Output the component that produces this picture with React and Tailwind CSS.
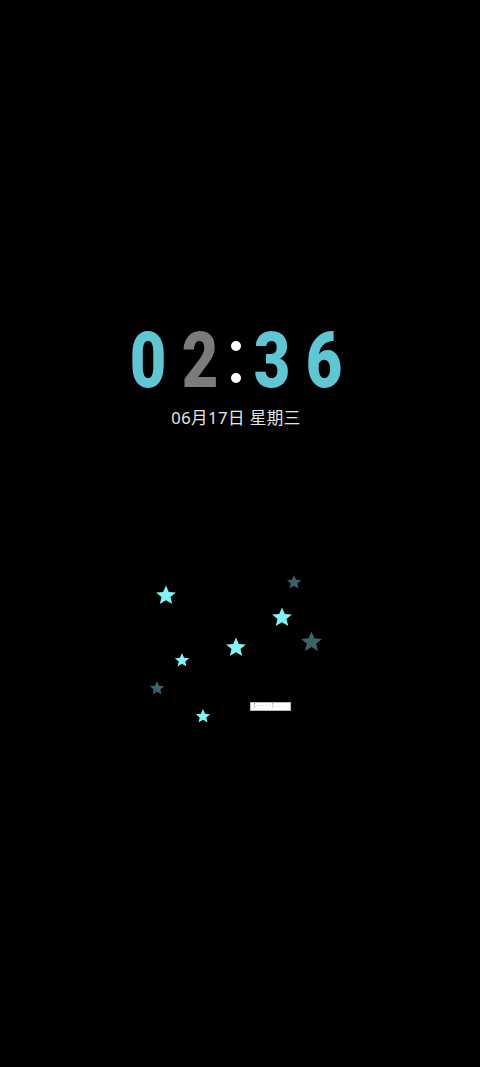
const STARS = [
  { x: 166, y: 595, s: 22, dim: false },
  { x: 294, y: 582, s: 16, dim: true },
  { x: 282, y: 617, s: 22, dim: false },
  { x: 311, y: 641, s: 23, dim: true },
  { x: 236, y: 647, s: 22, dim: false },
  { x: 182, y: 660, s: 16, dim: false },
  { x: 157, y: 688, s: 16, dim: true },
  { x: 203, y: 716, s: 16, dim: false },
];

function Star({ x, y, s, dim }) {
  return (
    <svg
      className="absolute"
      style={{ left: x - s / 2, top: y - s / 2, width: s, height: s }}
      viewBox="0 0 24 24"
    >
      <path
        d="M12 1.5l3.1 7.2 7.7.6-5.9 5 1.9 7.6L12 17.8l-6.8 4.1 1.9-7.6-5.9-5 7.7-.6z"
        fill={dim ? "#3a6468" : "#80f4f6"}
      />
    </svg>
  );
}

function Digit({ children, grey }) {
  return (
    <span
      className={`w-[52px] text-center scale-x-[0.82] ${grey ? "text-[#7b7b7b]" : "text-[#5fc6d4]"}`}
    >
      {children}
    </span>
  );
}

export default function App() {
  return (
    <div className="relative w-[480px] h-[1067px] bg-black overflow-hidden">
      <div className="flex flex-col items-center pt-[319px]">
        <div
          className="flex items-center mr-[8px] text-[77px] leading-[84px] font-black"
          style={{ fontFamily: 'Roboto, "Liberation Sans", sans-serif' }}
        >
          <Digit>0</Digit>
          <Digit grey>2</Digit>
          <span className="w-[20px] flex flex-col items-center gap-[22px] pt-[2px]">
            <span className="w-[10px] h-[10px] rounded-full bg-white" />
            <span className="w-[10px] h-[10px] rounded-full bg-white" />
          </span>
          <Digit>3</Digit>
          <Digit>6</Digit>
        </div>
        <div
          className="mt-[3px] mr-[8px] text-[16.5px] text-[#e6e6e6] tracking-[0.5px]"
          style={{ fontFamily: '"Noto Sans", "Noto Sans CJK SC", sans-serif' }}
        >
          06月17日 星期三
        </div>
      </div>

      {STARS.map((st, i) => (
        <Star key={i} {...st} />
      ))}

      <div className="absolute left-[250px] top-[702px] w-[41px] h-[9px] bg-white border border-[#bbb] flex items-center px-[2px] text-[5px] leading-none text-[#888] font-mono">
        [·····]..
      </div>
    </div>
  );
}
